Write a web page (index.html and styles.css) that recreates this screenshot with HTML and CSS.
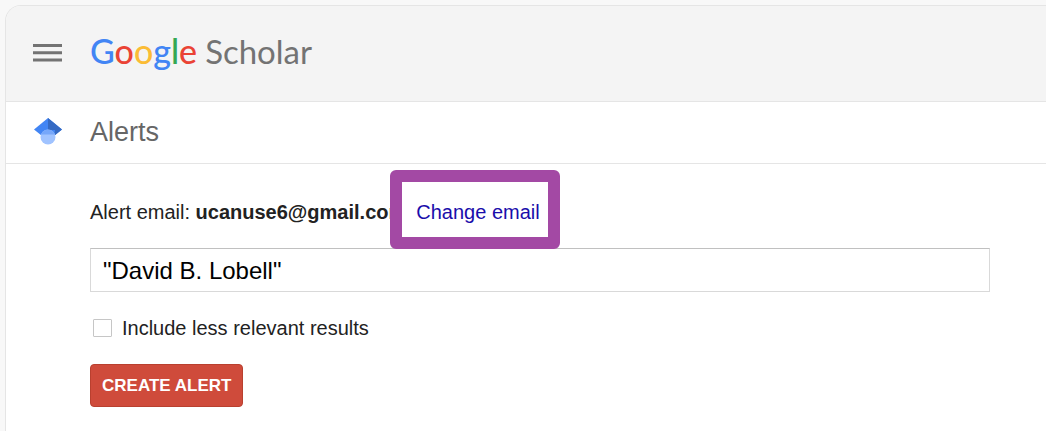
FILE: index.html
```html
<!DOCTYPE html>
<html lang="en">
<head>
<meta charset="utf-8">
<title>Google Scholar Alerts</title>
<link rel="stylesheet" href="styles.css">
</head>
<body>
<div class="page">
  <header class="topbar">
    <button class="menu" type="button" aria-label="Menu">
      <svg width="30" height="20" viewBox="0 0 30 20" fill="#737373"><path d="M0 1h29v3H0zM0 8.3h29v3H0zM0 15.6h29v3H0z"/></svg>
    </button>
    <a class="logo" href="#"><span class="google"><span class="blue">G</span><span class="red">o</span><span class="yellow">o</span><span class="blue">g</span><span class="green">l</span><span class="red">e</span></span><span class="scholar">Scholar</span></a>
  </header>
  <div class="titlebar">
    <div class="cap">
      <svg width="28" height="28" viewBox="0 0 28 28"><path d="M14 0 0 11.5l7.5 6h13L28 11.5z" fill="#4285f4"/><path d="M14 0v12h7l-.5 5.5L28 11.5z" fill="#356ac3"/><circle cx="14" cy="19" r="7.5" fill="#a0c3ff"/><path d="M7 16.5a7.5 7.5 0 0 1 14 0z" fill="#76a7fa"/></svg>
    </div>
    <h1 class="title">Alerts</h1>
  </div>
  <main class="content">
    <form class="form">
      <div class="email-row">
        <span>Alert email: <b>ucanuse6@gmail.com</b></span>
        <span class="change"><span class="highlight"></span><a class="change-link" href="#">Change email</a></span>
      </div>
      <input class="query" type="text" aria-label="Alert query" value='"David B. Lobell"'>
      <label class="option"><input class="check" type="checkbox">Include less relevant results</label>
      <button class="create" type="button">CREATE ALERT</button>
    </form>
  </main>
</div>
</body>
</html>
```
FILE: styles.css
```css
* { box-sizing: border-box; }
body {
  margin: 0;
  background: #f8f8f8;
  color: #222;
  font: 20px/24px "Liberation Sans", Arial, sans-serif;
}
.page {
  margin: 5px 0 0 5px;
  min-height: calc(100vh - 5px);
  border: solid #e5e5e5;
  border-width: 1px 0 0 1px;
  border-radius: 16px 0 0 0;
  background: #fff;
  overflow: hidden;
}
.topbar, .titlebar {
  display: grid;
  grid-template-columns: 84px 1fr;
  align-items: center;
  border-bottom: 1px solid #e5e5e5;
}
.topbar { height: 96px; padding-bottom: 2px; background: #f4f4f4; }
.titlebar { height: 62px; padding-bottom: 2px; }
.menu {
  display: flex;
  margin-left: 27px;
  padding: 0;
  border: 0;
  background: none;
  justify-self: start;
}
.logo {
  display: flex;
  align-items: baseline;
  gap: 8px;
  padding-bottom: 4px;
  font: 33px/44px Lato, sans-serif;
  color: #737373;
  text-decoration: none;
}
.google { font-weight: 500; font-size: 34px; }
.blue { color: #4285f4; }
.red { color: #ea4335; }
.yellow { color: #fbbc35; }
.green { color: #34a853; }
.cap { display: flex; padding-left: 28px; }
.title {
  margin: 0;
  color: #666;
  font-size: 27px;
  line-height: 32px;
  font-weight: 400;
}
.content { padding: 36px 56px 24px 84px; }
.form {
  display: flex;
  flex-direction: column;
  align-items: flex-start;
}
.email-row { display: flex; white-space: nowrap; }
.change {
  position: relative;
  margin-left: 10px;
}
.highlight {
  position: absolute;
  inset: -30px -20px -25px -26px;
  border: 12px solid #a349a4;
  border-radius: 6px;
  background: #fff;
}
.change-link {
  position: relative;
  color: #1a0dab;
  text-decoration: none;
}
.query {
  width: 100%;
  height: 44px;
  margin-top: 24px;
  padding: 2px 12px 0;
  border: 1px solid #d9d9d9;
  border-top-color: #c0c0c0;
  background: #fff;
  color: #000;
  font: 24px/28px "Liberation Sans", Arial, sans-serif;
}
.option {
  display: flex;
  align-items: center;
  gap: 10px;
  margin: 24px 0;
  padding-left: 3px;
}
.check {
  appearance: none;
  width: 19px;
  height: 18px;
  margin: 0;
  border: 1px solid #c6c6c6;
  border-radius: 1px;
  background: #fff;
}
.create {
  height: 43px;
  padding: 0 11px;
  border: 1px solid #b9402f;
  border-radius: 4px;
  background: #cf4b3b;
  color: #fff;
  font: bold 17px/20px "Liberation Sans", Arial, sans-serif;
}
```
